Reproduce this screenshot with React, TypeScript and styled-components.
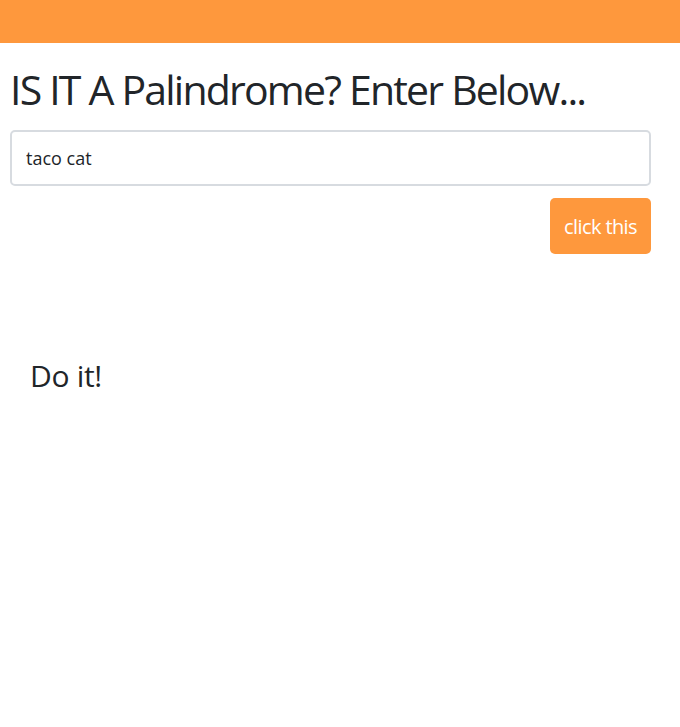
import React, { useState } from 'react'
import styled, { createGlobalStyle } from 'styled-components'

const GlobalStyle = createGlobalStyle`
  body {
    margin: 0;
    background: #fff;
    color: #212529;
    font-family: "Open Sans", "Noto Sans", sans-serif;
  }
`

const TopBar = styled.div`
  height: 43px;
  background: #fe983d;
`

const Main = styled.main`
  width: 641px;
  margin-left: 10px;
`

const Title = styled.h1`
  margin: 22px 0 16px;
  font-size: 41px;
  font-weight: 400;
  line-height: 1.2;
  letter-spacing: -1.8px;
  white-space: nowrap;
`

const Field = styled.input`
  display: block;
  box-sizing: border-box;
  width: 100%;
  height: 56px;
  padding: 0 14px;
  border: 2px solid #d7dbe0;
  border-radius: 5px;
  font-family: inherit;
  font-size: 18px;
  color: #212529;
  outline: none;
`

const Actions = styled.div`
  display: flex;
  justify-content: flex-end;
  margin-top: 12px;
`

const Button = styled.button`
  height: 56px;
  padding: 0 14px;
  border: none;
  border-radius: 5px;
  background: #fe983d;
  color: #fff;
  font-family: inherit;
  font-size: 20px;
  letter-spacing: -0.6px;
  cursor: pointer;
`

const Result = styled.h3`
  margin: 101px 0 0 20px;
  font-size: 30px;
  font-weight: 400;
  line-height: normal;
  letter-spacing: -0.3px;
`

const App = () => {
  const [text, setText] = useState('taco cat')
  const [result, setResult] = useState('Do it!')

  const check = (): void => {
    const clean = text.toLowerCase().replace(/[^a-z0-9]/g, '')
    setResult(clean === clean.split('').reverse().join('') ? 'Yes!' : 'Nope')
  }

  return (
    <>
      <GlobalStyle />
      <TopBar />
      <Main>
        <Title>IS IT A Palindrome? Enter Below...</Title>
        <Field value={text} onChange={(e) => setText(e.target.value)} />
        <Actions>
          <Button onClick={check}>click this</Button>
        </Actions>
        <Result>{result}</Result>
      </Main>
    </>
  )
}

export default App
